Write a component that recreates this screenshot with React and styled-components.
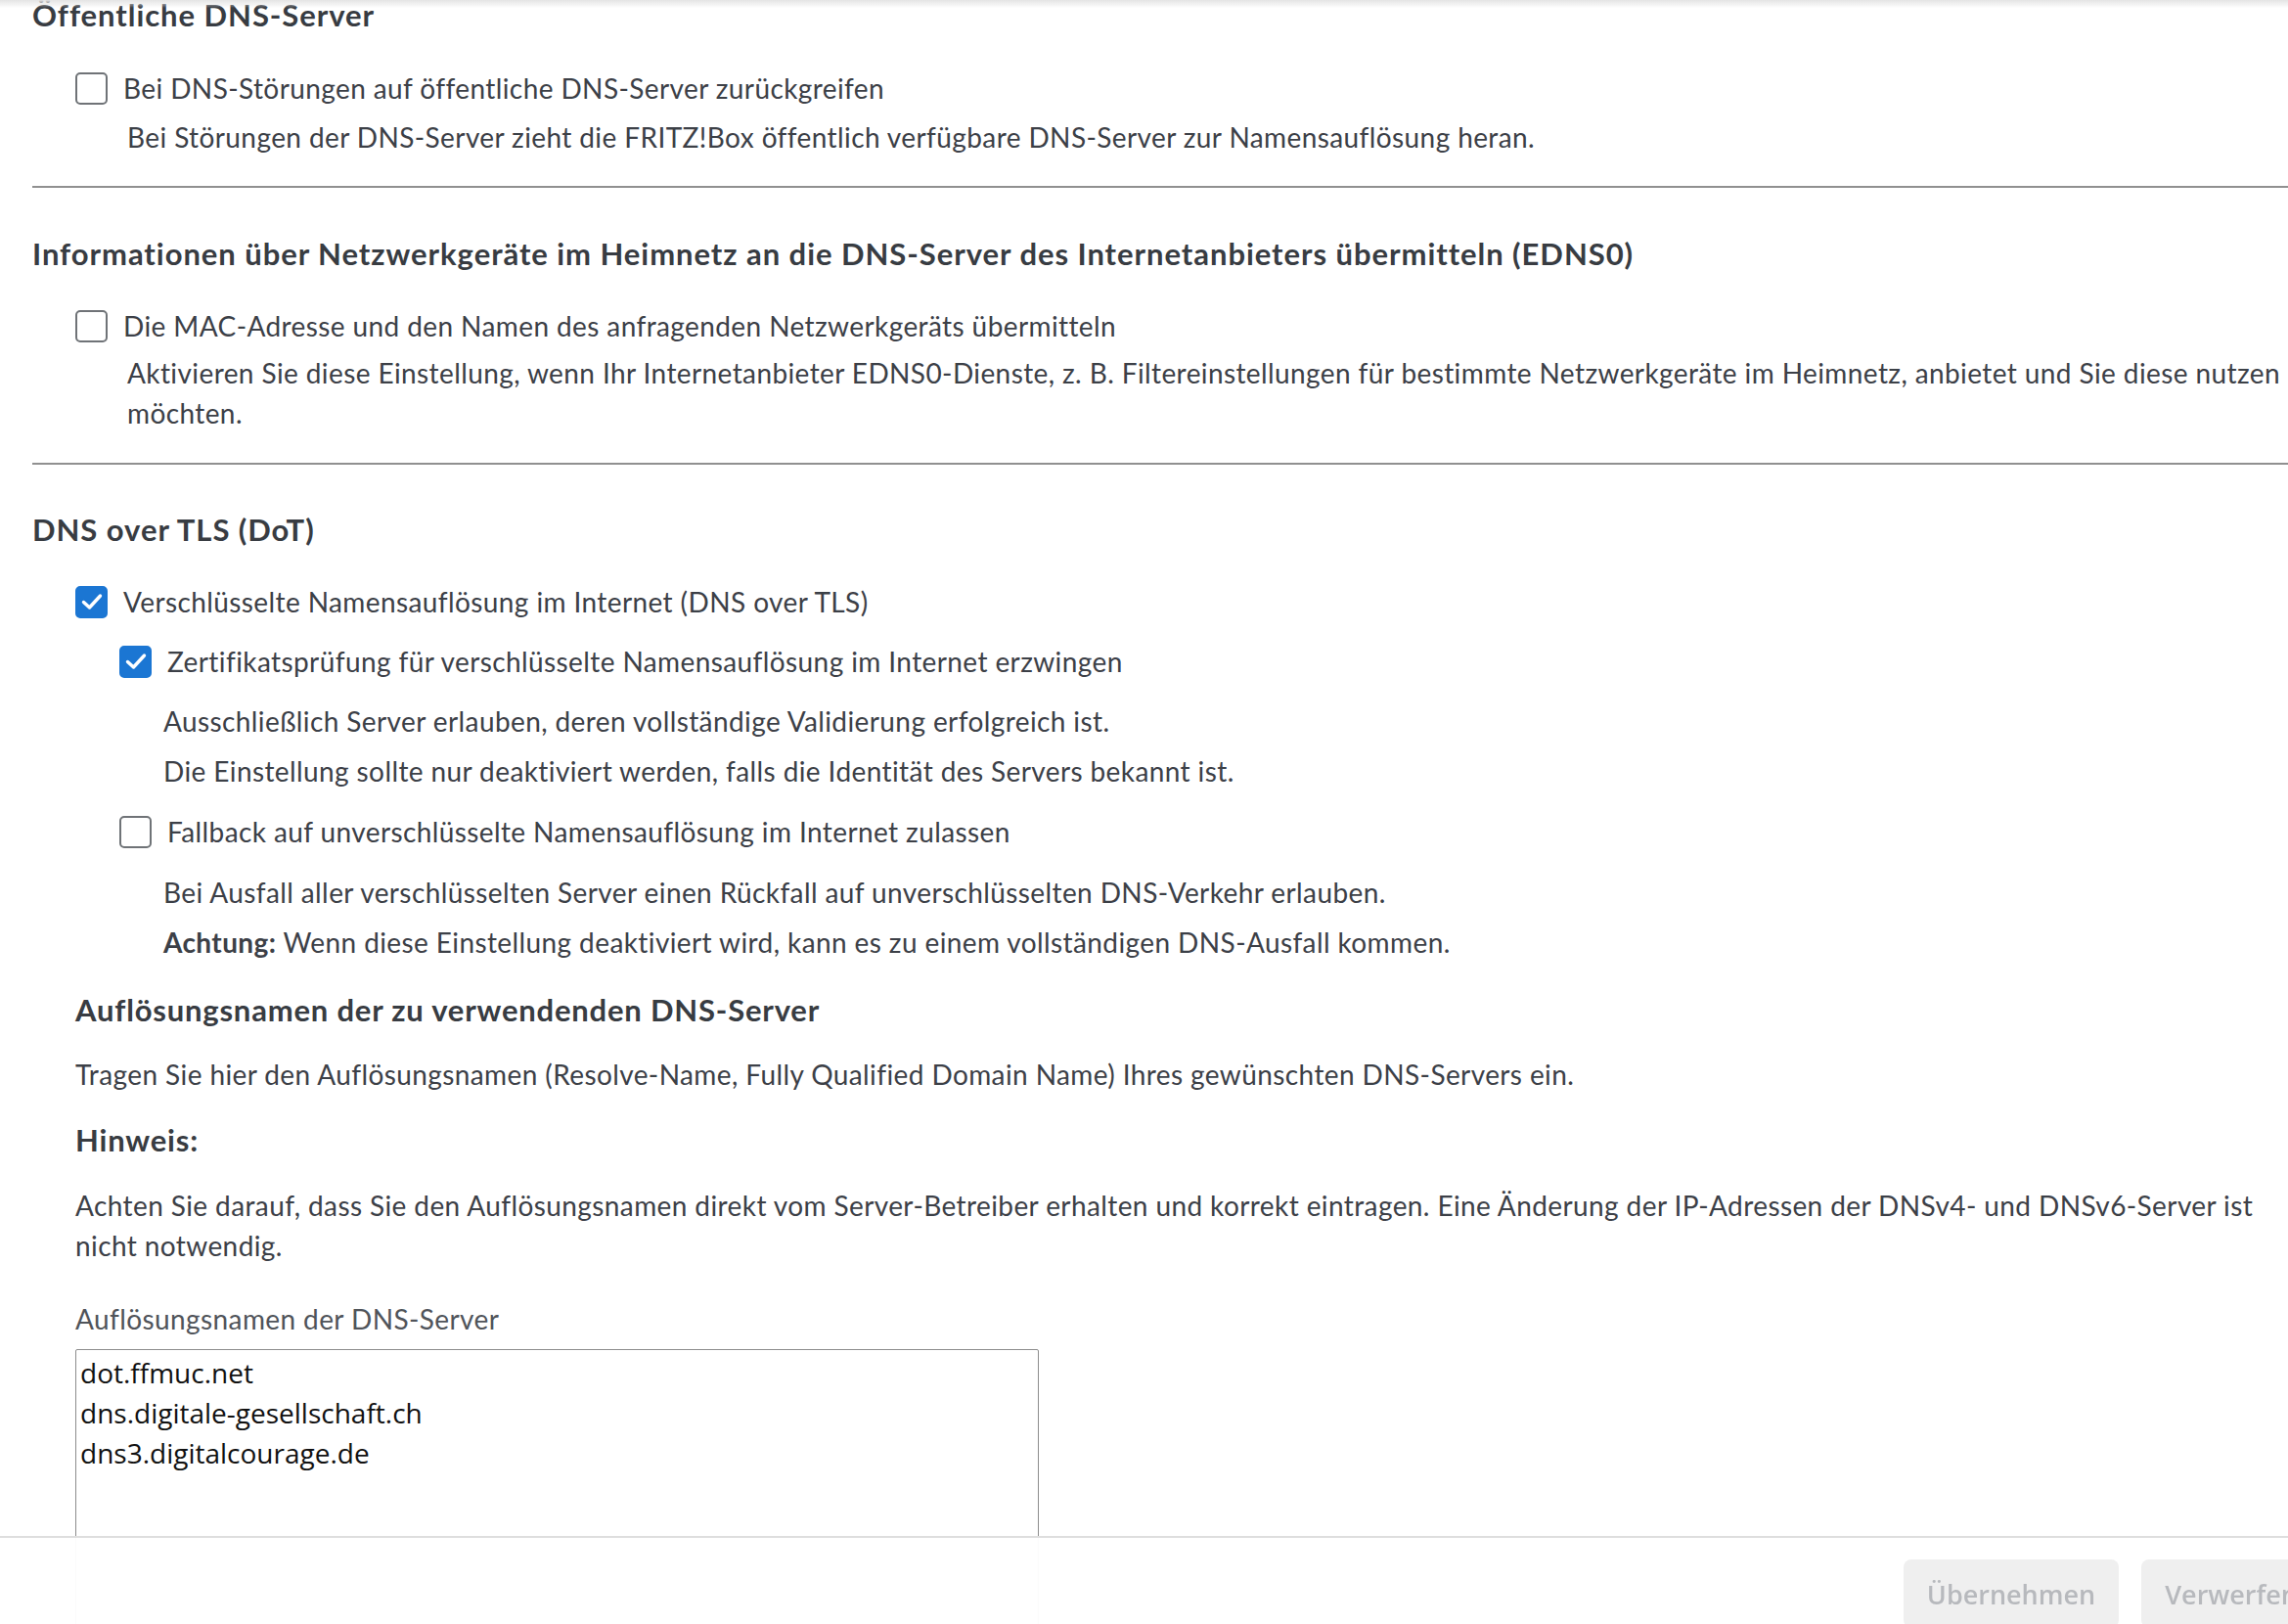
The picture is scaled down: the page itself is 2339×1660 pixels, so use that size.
import React from 'react'
import styled, { createGlobalStyle } from 'styled-components'

const GlobalStyle = createGlobalStyle`
  html, body {
    margin: 0;
    padding: 0;
    background: #fff;
    overflow: hidden;
  }
  body {
    font-family: Lato, "Open Sans", sans-serif;
    color: #3c4047;
  }
`

const Page = styled.div`
  width: 2400px;
  box-sizing: border-box;
  padding: 0 35px 300px 33px;
  font-size: 28px;
  line-height: 42px;
  letter-spacing: 0.4px;
`

const TopShade = styled.div`
  position: fixed;
  top: 0;
  left: 0;
  right: 0;
  height: 8px;
  background: linear-gradient(#e4e4e4, rgba(255, 255, 255, 0));
  pointer-events: none;
`

const SectionTitle = styled.h2`
  margin: ${p => p.$top}px 0 0;
  font-size: 31px;
  line-height: 42px;
  letter-spacing: 0.95px;
  font-weight: 700;
  color: #383c42;
`

const Separator = styled.hr`
  margin: ${p => p.$top}px 0 0;
  border: 0;
  border-top: 2px solid #909090;
  height: 0;
`

const CheckRow = styled.label`
  display: flex;
  align-items: center;
  gap: 16px;
  height: 42px;
  margin: ${p => p.$top}px 0 0 ${p => 44 + (p.$indent || 0)}px;
`

const Box = styled.span`
  flex: none;
  width: 33px;
  height: 33px;
  box-sizing: border-box;
  border-radius: 5px;
  border: 2px solid ${p => (p.$checked ? '#1b76d3' : '#6f7377')};
  background: ${p => (p.$checked ? '#1b76d3' : '#fff')};
  display: flex;
  align-items: center;
  justify-content: center;
`

const Hint = styled.p`
  margin: ${p => p.$top}px 0 0 ${p => p.$left}px;
  line-height: ${p => p.$lh || 42}px;
`

const SubTitle = styled.h3`
  margin: ${p => p.$top}px 0 0 44px;
  font-size: 31px;
  line-height: 42px;
  letter-spacing: 0.8px;
  font-weight: 700;
  color: #383c42;
`

const Text = styled.p`
  margin: ${p => p.$top}px 0 0 44px;
  line-height: 41px;
`

const FieldLabel = styled.div`
  margin: 33px 0 0 44px;
  color: #50545a;
`

const Area = styled.textarea`
  display: block;
  margin: 10px 0 0 44px;
  width: 985px;
  height: 420px;
  box-sizing: border-box;
  padding: 3px 4px;
  border: 1px solid #8d8d8d;
  border-radius: 2px;
  resize: none;
  font-family: "Open Sans", sans-serif;
  font-size: 28px;
  line-height: 41px;
  color: #111;
  background: #fff;
  outline: none;
`

const Footer = styled.div`
  position: fixed;
  left: 0;
  top: 1570px;
  width: 2373px;
  height: 120px;
  box-sizing: border-box;
  border-top: 2px solid #dedede;
  background: rgba(255, 255, 255, 0.96);
  display: flex;
  justify-content: flex-end;
  align-items: flex-start;
  gap: 23px;
  padding: 22px 0 0 0;
`

const Button = styled.button`
  height: 70px;
  padding: 0 24px;
  border: 0;
  border-radius: 8px;
  background: #efefef;
  color: #b7b9bd;
  font-family: "Open Sans", sans-serif;
  font-weight: 600;
  font-size: 27px;
`

const Check = () => (
  <svg width="22" height="18" viewBox="0 0 22 18">
    <path d="M2.5 9.5 L8.5 15 L19.5 3" fill="none" stroke="#fff" strokeWidth="3.4" strokeLinecap="round" strokeLinejoin="round" />
  </svg>
)

const Option = ({ checked, indent, top, children }) => (
  <CheckRow $top={top} $indent={indent}>
    <Box $checked={checked}>{checked && <Check />}</Box>
    <span>{children}</span>
  </CheckRow>
)

export default function App() {
  return (
    <>
      <GlobalStyle />
      <Page>
        <SectionTitle $top={-6}>Öffentliche DNS-Server</SectionTitle>
        <Option top={33}>Bei DNS-Störungen auf öffentliche DNS-Server zurückgreifen</Option>
        <Hint $top={8} $left={97}>
          Bei Störungen der DNS-Server zieht die FRITZ!Box öffentlich verfügbare DNS-Server zur Namensauflösung heran.
        </Hint>
        <Separator $top={29} />

        <SectionTitle $top={46}>
          Informationen über Netzwerkgeräte im Heimnetz an die DNS-Server des Internetanbieters übermitteln (EDNS0)
        </SectionTitle>
        <Option top={32}>Die MAC-Adresse und den Namen des anfragenden Netzwerkgeräts übermitteln</Option>
        <Hint $top={7} $left={97} $lh={41}>
          Aktivieren Sie diese Einstellung, wenn Ihr Internetanbieter EDNS0-Dienste, z. B. Filtereinstellungen für bestimmte Netzwerkgeräte im Heimnetz, anbietet und Sie diese nutzen möchten.
        </Hint>
        <Separator $top={30} />

        <SectionTitle $top={45}>DNS over TLS (DoT)</SectionTitle>
        <Option top={32} checked>Verschlüsselte Namensauflösung im Internet (DNS over TLS)</Option>
        <Option top={19} indent={45} checked>
          Zertifikatsprüfung für verschlüsselte Namensauflösung im Internet erzwingen
        </Option>
        <Hint $top={19} $left={134}>Ausschließlich Server erlauben, deren vollständige Validierung erfolgreich ist.</Hint>
        <Hint $top={9} $left={134}>Die Einstellung sollte nur deaktiviert werden, falls die Identität des Servers bekannt ist.</Hint>
        <Option top={20} indent={45}>Fallback auf unverschlüsselte Namensauflösung im Internet zulassen</Option>
        <Hint $top={20} $left={134}>
          Bei Ausfall aller verschlüsselten Server einen Rückfall auf unverschlüsselten DNS-Verkehr erlauben.
        </Hint>
        <Hint $top={9} $left={134}>
          <b>Achtung:</b> Wenn diese Einstellung deaktiviert wird, kann es zu einem vollständigen DNS-Ausfall kommen.
        </Hint>

        <SubTitle $top={27}>Auflösungsnamen der zu verwendenden DNS-Server</SubTitle>
        <Text $top={25}>
          Tragen Sie hier den Auflösungsnamen (Resolve-Name, Fully Qualified Domain Name) Ihres gewünschten DNS-Servers ein.
        </Text>
        <SubTitle $top={25}>Hinweis:</SubTitle>
        <Text $top={26}>
          Achten Sie darauf, dass Sie den Auflösungsnamen direkt vom Server-Betreiber erhalten und korrekt eintragen. Eine Änderung der IP-Adressen der DNSv4- und DNSv6-Server ist nicht notwendig.
        </Text>
        <FieldLabel>Auflösungsnamen der DNS-Server</FieldLabel>
        <Area
          readOnly
          defaultValue={'dot.ffmuc.net\ndns.digitale-gesellschaft.ch\ndns3.digitalcourage.de'}
        />
      </Page>
      <TopShade />
      <Footer>
        <Button disabled>Übernehmen</Button>
        <Button disabled>Verwerfen</Button>
      </Footer>
    </>
  )
}
